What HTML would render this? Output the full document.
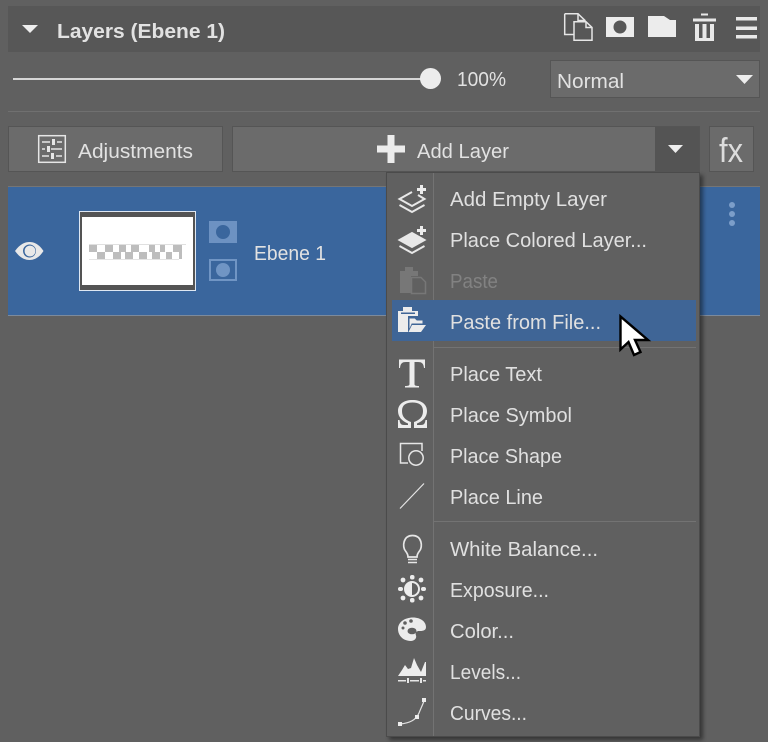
<!DOCTYPE html>
<html><head><meta charset="utf-8"><title>Layers</title>
<style>
html,body{margin:0;padding:0;width:768px;height:742px;overflow:hidden;background:#606060}
svg{display:block}
text{font-family:"Liberation Sans",sans-serif;fill:#e2e2e2;font-size:20px}
.m{fill:#e0e0e0}
</style></head><body>
<svg width="768" height="742" viewBox="0 0 768 742" xmlns="http://www.w3.org/2000/svg">
<defs><filter id="sh" x="-5%" y="-5%" width="115%" height="115%"><feDropShadow dx="3" dy="3" stdDeviation="2" flood-color="#000" flood-opacity=".45"/></filter></defs>
<rect width="768" height="742" fill="#606060"/>
<!-- header -->
<rect x="8" y="6" width="752" height="46" fill="#575757"/>
<path d="M22 25H38L30 33Z" fill="#eee"/>
<text x="57" y="38" font-weight="700" textLength="168" lengthAdjust="spacingAndGlyphs" style="font-size:20px">Layers (Ebene 1)</text>
<!-- header icons -->
<g fill="none" stroke="#e6e6e6" stroke-width="1.500">
<path d="M564.700 13.700H578L585 20.500V22M564.700 13.700V34.500H574"/>
<path d="M578 13.700V20.500H585"/>
<path d="M574 21.700H586L592 27.500V40.300H574Z"/>
<path d="M586 21.700V27.500H592"/>
</g>
<path fill-rule="evenodd" d="M606 17H634V37H606ZM620 20.500A6.500 6.500 0 1 0 620 33.500A6.500 6.500 0 1 0 620 20.500Z" fill="#ececec"/>
<path d="M648 16H664L670 20H676V37H648Z" fill="#ececec"/>
<g fill="#e8e8e8">
<rect x="693" y="18.500" width="23" height="3"/><rect x="701" y="13.500" width="7" height="2"/>
<path d="M695 24H714V41H695ZM699 24V38H702.500V24ZM706.500 24V38H710V24Z" fill-rule="evenodd"/>
<rect x="736" y="17" width="21" height="3.500"/><rect x="736" y="26.500" width="21" height="3.500"/><rect x="736" y="35" width="21" height="3.500"/>
</g>
<!-- slider -->
<rect x="13" y="78" width="412" height="2" fill="#d6d6d6"/>
<circle cx="430.500" cy="78.500" r="10.500" fill="#ececec"/>
<text x="457" y="86" textLength="49" lengthAdjust="spacingAndGlyphs">100%</text>
<rect x="550.500" y="60.500" width="209" height="37" fill="#6b6b6b" stroke="#555"/>
<text x="557" y="88" textLength="67" lengthAdjust="spacingAndGlyphs">Normal</text>
<path d="M736 75H753L744.500 84Z" fill="#eee"/>
<rect x="8" y="111" width="752" height="1" fill="#707070"/>
<!-- buttons -->
<rect x="8.500" y="126.500" width="214" height="45" fill="#6b6b6b" stroke="#555"/>
<g fill="none" stroke="#e6e6e6" stroke-width="1.500">
<rect x="38.700" y="135.700" width="26.600" height="26.600"/>
<path d="M42 142H50M57 142H62M42 149H45M51 149H62M42 156H49M56 156H62"/>
</g>
<g fill="#e6e6e6"><rect x="52" y="139" width="3" height="6"/><rect x="47" y="146" width="3" height="6"/><rect x="51" y="153" width="3" height="6"/></g>
<text x="78" y="158" textLength="115" lengthAdjust="spacingAndGlyphs">Adjustments</text>
<rect x="232.500" y="126.500" width="467" height="45" fill="#6b6b6b" stroke="#555"/>
<rect x="655" y="127" width="44" height="44" fill="#545454"/>
<path d="M668 145H683L675.500 153Z" fill="#eee"/>
<rect x="377" y="145.500" width="28" height="7" fill="#ececec"/><rect x="387.500" y="135" width="7" height="28" fill="#ececec"/>
<text x="417" y="158" textLength="92" lengthAdjust="spacingAndGlyphs">Add Layer</text>
<rect x="709.500" y="126.500" width="44" height="45" fill="#6b6b6b" stroke="#555"/>
<text x="719" y="162" textLength="24" lengthAdjust="spacingAndGlyphs" style="font-size:34px;fill:#dcdcdc">fx</text>
<!-- layer row -->
<rect x="8" y="186" width="752" height="1" fill="#757575"/>
<rect x="8" y="187" width="752" height="128" fill="#3a669d"/>
<rect x="8" y="315" width="752" height="1" fill="#7c8a9c"/>
<path fill-rule="evenodd" d="M15 251C20 244 25 242 29.500 242C34 242 39 244 43.500 251C39 258 34 260 29.500 260C25 260 20 258 15 251ZM29.500 244.500A6.500 6.500 0 1 0 29.500 257.500A6.500 6.500 0 1 0 29.500 244.500Z" fill="#e8e8e8"/>
<circle cx="30" cy="251" r="5.400" fill="#e8e8e8"/>
<rect x="79.500" y="211.500" width="116" height="79" fill="#545454" stroke="#dfe8f3"/>
<rect x="82" y="217" width="111" height="68" fill="#fff"/>
<g fill="#bdbdbd">
<rect x="89" y="245" width="8" height="7"/><rect x="97" y="252" width="8" height="7"/><rect x="105" y="245" width="8" height="7"/><rect x="113" y="252" width="8" height="7"/><rect x="119" y="245" width="7" height="7"/><rect x="131" y="245" width="8" height="7"/><rect x="125" y="252" width="8" height="7"/><rect x="139" y="252" width="8" height="7"/><rect x="149" y="245" width="6" height="7"/><rect x="152" y="252" width="8" height="7"/><rect x="160" y="245" width="5" height="7"/><rect x="166" y="252" width="6" height="7"/><rect x="173" y="245" width="9" height="7"/><rect x="179" y="252" width="3" height="7"/>
</g>
<rect x="89" y="244" width="97" height="1" fill="#e0e0e0"/><rect x="89" y="259" width="90" height="1" fill="#e4e4e4"/>
<path fill-rule="evenodd" d="M209 221H237V243H209ZM223 225A7 7 0 1 0 223 239A7 7 0 1 0 223 225Z" fill="#7095c4" opacity=".95"/>
<rect x="210" y="260" width="26" height="20" fill="none" stroke="#7095c4" stroke-width="2"/>
<circle cx="223" cy="270" r="7" fill="#7095c4"/>
<text x="254" y="260" textLength="72" lengthAdjust="spacingAndGlyphs">Ebene 1</text>
<g fill="#7c9ec9"><circle cx="732" cy="205" r="3"/><circle cx="732" cy="214" r="3"/><circle cx="732" cy="223" r="3"/></g>
<!-- menu -->
<rect x="386.500" y="172.500" width="313" height="564" fill="#606060" stroke="#4c4c4c" filter="url(#sh)"/>
<rect x="433" y="173" width="1" height="563" fill="#737373"/>
<rect x="392" y="300" width="304" height="41" fill="#3f6596"/>
<rect x="433" y="347" width="263" height="1" fill="#737373"/>
<rect x="433" y="521" width="263" height="1" fill="#737373"/>
<g class="items">
<text class="m" x="450" y="206" textLength="157" lengthAdjust="spacingAndGlyphs">Add Empty Layer</text>
<text class="m" x="450" y="247" textLength="197" lengthAdjust="spacingAndGlyphs">Place Colored Layer...</text>
<text x="450" y="288" textLength="48" lengthAdjust="spacingAndGlyphs" style="fill:#828282">Paste</text>
<text class="m" x="450" y="329" textLength="151" lengthAdjust="spacingAndGlyphs">Paste from File...</text>
<text class="m" x="450" y="381" textLength="92" lengthAdjust="spacingAndGlyphs">Place Text</text>
<text class="m" x="450" y="422" textLength="122" lengthAdjust="spacingAndGlyphs">Place Symbol</text>
<text class="m" x="450" y="463" textLength="112" lengthAdjust="spacingAndGlyphs">Place Shape</text>
<text class="m" x="450" y="504" textLength="93" lengthAdjust="spacingAndGlyphs">Place Line</text>
<text class="m" x="450" y="556" textLength="148" lengthAdjust="spacingAndGlyphs">White Balance...</text>
<text class="m" x="450" y="597" textLength="99" lengthAdjust="spacingAndGlyphs">Exposure...</text>
<text class="m" x="450" y="638" textLength="64" lengthAdjust="spacingAndGlyphs">Color...</text>
<text class="m" x="450" y="679" textLength="71" lengthAdjust="spacingAndGlyphs">Levels...</text>
<text class="m" x="450" y="720" textLength="77" lengthAdjust="spacingAndGlyphs">Curves...</text>
</g>
<!-- menu icons -->
<g fill="none" stroke="#e8e8e8" stroke-width="2">
<path d="M412 192L399.500 199L412 206L424.500 199L418 195"/>
<path d="M399.500 205L412 212L424.500 205"/>
<path d="M412 233L399.500 240L412 247L424.500 240L412 233Z" fill="#e8e8e8"/>
<path d="M399.500 246L412 253L424.500 246"/>
</g>
<g fill="#ececec"><rect x="417" y="188" width="9" height="3"/><rect x="420" y="185" width="3" height="9"/><rect x="417" y="229" width="9" height="3"/><rect x="420" y="226" width="3" height="9"/></g>
<g fill="#777">
<path d="M400 271H405V267H413V271H418V276H411V293H400Z"/>
</g>
<path d="M411.500 277.500H421L425.500 282V293.500H411.500Z" fill="#606060" stroke="#777" stroke-width="1.500"/>
<path d="M398 311H403V307H412V311H418V316H408V332H398Z" fill="#ececec"/>
<rect x="401" y="312.500" width="14" height="1.500" fill="#3f6596"/>
<path d="M409 318H415L417 320H423V324H412L409 331Z" fill="#ececec" stroke="#3f6596"/>
<path d="M412 325H426L421 332H408.500Z" fill="#ececec"/>
<!-- T -->
<path d="M399 368V359.500H425V368H424C423.500 363.500 422 362 418 362H414.500V384C414.500 385.500 415.500 386 419 386V387.500H405V386C408.500 386 409.500 385.500 409.500 384V362H406C402 362 400.500 363.500 400 368Z" fill="#ececec"/>
<!-- Omega -->
<path fill-rule="evenodd" d="M398 428V420H399.500C400 423.500 401 425 404 425H408V423.500C402 421 398 417 398 411C398 404 404 400 412.500 400C421 400 427 404 427 411C427 417 423 421 417 423.500V425H421C424 425 425 423.500 425.500 420H427V428H414V422C419.500 420 423 417 423 411C423 405 419 402.500 412.500 402.500C406 402.500 402 405 402 411C402 417 405.500 420 411 422V428Z" fill="#ececec"/>
<!-- shape -->
<g fill="none" stroke="#e6e6e6" stroke-width="1.500">
<path d="M408 463H400.500V443.500H422V451"/>
<circle cx="416" cy="458" r="7.200"/>
<path d="M400 508.500L424 483.500" stroke-width="1.200"/>
<path d="M405.500 551C402 547 403 535.500 412.500 535.500C422 535.500 423 547 419.500 551C417.500 553.500 417 555 417 557H408C408 555 407.500 553.500 405.500 551Z" stroke-width="1.700"/>
<path d="M408 559.500H417M408 562.500H417" stroke-width="1.500"/>
</g>
<!-- sun -->
<g fill="#ececec">
<path fill-rule="evenodd" d="M412 581A8 8 0 1 0 412 597A8 8 0 1 0 412 581ZM412 583V595A6 6 0 0 0 412 583Z"/>
<rect x="410" y="575" width="4.500" height="4.500" rx="2"/><rect x="410" y="598" width="4.500" height="4.500" rx="2"/>
<rect x="398" y="587" width="5" height="4" rx="2"/><rect x="421" y="587" width="5" height="4" rx="2"/>
<circle cx="403" cy="580" r="2.400"/><circle cx="421" cy="580" r="2.400"/><circle cx="403" cy="598" r="2.400"/><circle cx="421" cy="598" r="2.400"/>
</g>
<!-- palette -->
<path fill-rule="evenodd" d="M413 617.500C421 617.500 426 622 426 627C426 631 422 631 419 631C416 631 415 633 416 635.500C417 638.500 414 641 411 641C403 641 398 635.500 398 629C398 622 405 617.500 413 617.500Z" fill="#ececec"/>
<g fill="#606060"><circle cx="405" cy="623" r="1.800"/><circle cx="411" cy="621" r="1.800"/><circle cx="403" cy="628" r="1.500"/><ellipse cx="412" cy="631" rx="4.500" ry="3.300"/></g>
<!-- levels -->
<path d="M398 676L402 670L405 665L408 669L411 668L414 658L417 665L421 672L425 662H426V676Z" fill="#ececec"/>
<g fill="#e6e6e6"><rect x="398" y="680" width="8" height="1.500"/><rect x="410" y="680" width="9" height="1.500"/><rect x="423" y="680" width="3" height="1.500"/><rect x="407" y="678" width="2" height="5"/><rect x="420" y="678" width="2" height="5"/></g>
<!-- curves -->
<path d="M400 724C410 723 416 720 419 713C421 708 423 704 424 701" fill="none" stroke="#e0e0e0" stroke-width="1.200"/>
<g fill="#ececec"><rect x="398" y="722" width="4" height="4"/><rect x="415" y="715" width="4" height="4"/><rect x="422" y="698" width="4" height="4"/></g>
<!-- cursor -->
<path d="M620.500 316.500V349.500L628.500 342L634 355L640.500 352L635 340H648Z" fill="#fff" stroke="#000" stroke-width="2.400" stroke-linejoin="miter"/>
</svg>
</body></html>
